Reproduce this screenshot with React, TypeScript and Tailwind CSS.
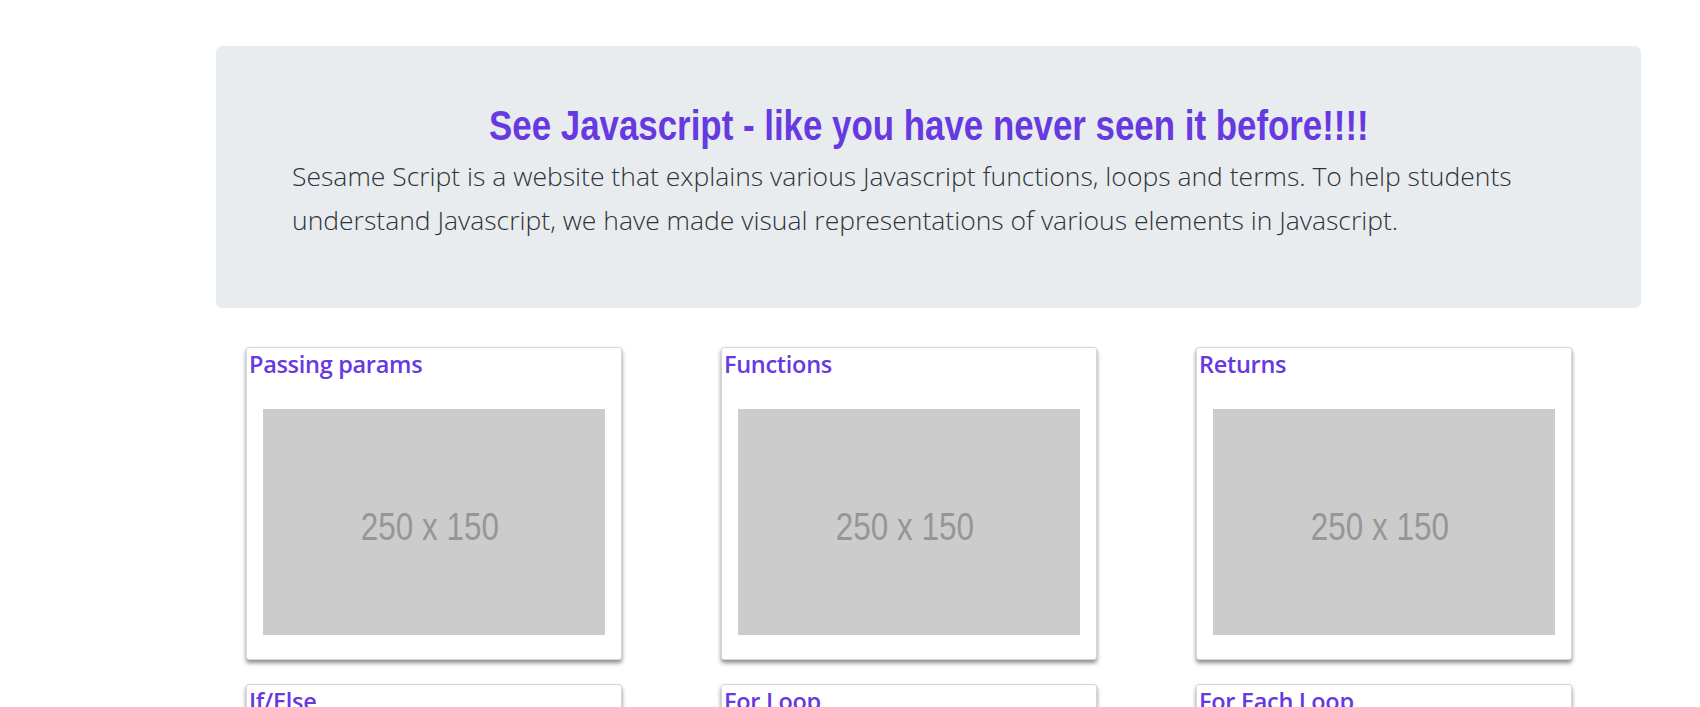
import React from "react";

const cards = [
  "Passing params",
  "Functions",
  "Returns",
  "If/Else",
  "For Loop",
  "For Each Loop",
];

function Placeholder() {
  return (
    <svg
      viewBox="0 0 250 150"
      preserveAspectRatio="none"
      className="block w-[342px] h-[226px]"
    >
      <rect x="0" y="0" width="250" height="150" fill="#cccccc" />
      <text
        x="122"
        y="87"
        textAnchor="middle"
        fontFamily="'Liberation Sans', Arial, sans-serif"
        fontSize="26"
        textLength="101"
        lengthAdjust="spacingAndGlyphs"
        fill="#969696"
      >
        250 x 150
      </text>
    </svg>
  );
}

function Card({ title }: { title: string }) {
  return (
    <div className="w-[376px] h-[313px] bg-white border border-[#d6d6d6] rounded-[3px] shadow-[0_3px_4px_rgba(0,0,0,0.45)] flex flex-col">
      <h5 className="pl-[2px] pt-[1px] text-[23.5px] leading-[30px] font-semibold text-[#6639e1] font-['Open_Sans','Noto_Sans',sans-serif] tracking-[-0.3px]">
        {title}
      </h5>
      <div className="pl-[16px] pt-[30px]">
        <Placeholder />
      </div>
    </div>
  );
}

export default function App() {
  return (
    <div className="min-h-[707px] bg-white overflow-hidden">
      <div className="pt-[46px] pl-[216px] pr-[59px]">
        <div className="h-[262px] bg-[#e9ecef] rounded-[6px] pt-[55px]">
          <div className="flex justify-center">
            <h1 className="inline-block whitespace-nowrap scale-x-[0.83] text-[42px] leading-[50px] font-bold text-[#6639e1] font-['Liberation_Sans',Arial,sans-serif]">
              See Javascript - like you have never seen it before!!!!
            </h1>
          </div>
          <p className="mt-[3px] pl-[76px] pr-[80px] text-[26.5px] leading-[44px] font-light text-[#2f3337] font-['Open_Sans','Noto_Sans',sans-serif]">
            Sesame Script is a website that explains various Javascript
            functions, loops and terms. To help students understand Javascript,
            we have made visual representations of various elements in
            Javascript.
          </p>
        </div>
      </div>
      <div className="pt-[39px] pl-[246px] grid grid-cols-[376px_376px_376px] gap-x-[99px] gap-y-[24px]">
        {cards.map((c) => (
          <Card key={c} title={c} />
        ))}
      </div>
    </div>
  );
}
